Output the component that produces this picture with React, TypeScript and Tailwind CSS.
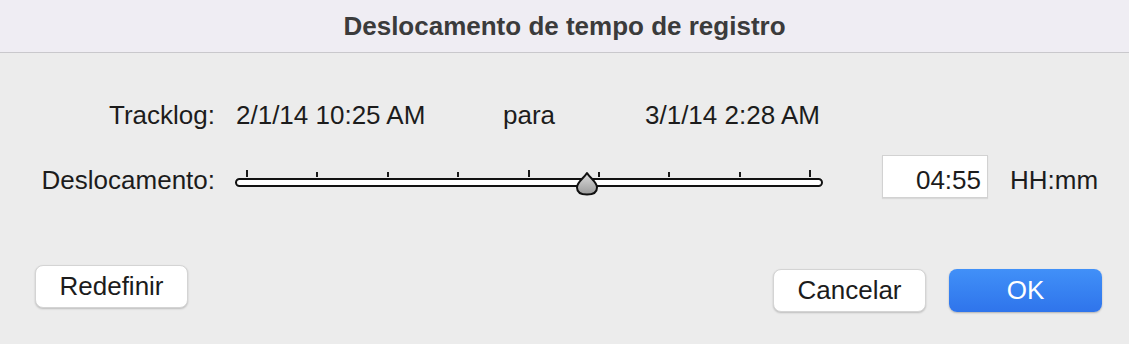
import React from "react";

const font = { fontFamily: '"Liberation Sans", Arial, sans-serif' };

const TICKS = [0, 1, 2, 3, 4, 5, 6, 7, 8];
const MAJOR = [0, 4, 8];

function Slider({ value }: { value: number }) {
  return (
    <div className="relative h-[43px] w-[588px]">
      <div className="flex flex-col pt-[15px]">
        <div className="flex h-[7px] items-end justify-between pl-[11px] pr-[12px]">
          {TICKS.map((t) => (
            <div
              key={t}
              className={
                MAJOR.includes(t)
                  ? "h-[7px] w-[2px] bg-[#1a1a1a]"
                  : "h-[5px] w-[2px] bg-[#1a1a1a]"
              }
            />
          ))}
        </div>
        <div className="mt-[1px] h-[9px] rounded-full border-2 border-[#111] bg-white" />
      </div>
      <svg
        className="absolute top-[16px]"
        style={{ left: `calc(12px + ${value} * (100% - 25px) - 11px)` }}
        width="24"
        height="25"
        viewBox="0 0 24 25"
      >
        <defs>
          <linearGradient id="thumb" x1="0" y1="0" x2="0" y2="1">
            <stop offset="0" stopColor="#dcdcdc" />
            <stop offset="1" stopColor="#9a9a9a" />
          </linearGradient>
        </defs>
        <path
          d="M12 2 C15 7 22 11 22 16.5 C22 21 18 23.5 12 23.5 C6 23.5 2 21 2 16.5 C2 11 9 7 12 2 Z"
          fill="url(#thumb)"
          stroke="#111"
          strokeWidth="2"
          strokeLinejoin="round"
        />
      </svg>
    </div>
  );
}

export default function App() {
  return (
    <div
      className="flex h-[344px] w-[1129px] flex-col bg-[#ececec] text-[26px] text-[#1c1c1c]"
      style={font}
    >
      <div className="flex h-[53px] shrink-0 items-center justify-center border-b border-[#c9c8cc] bg-[#efedf3]">
        <h1 className="text-[26px] font-bold text-[#3b3b3b]">
          Deslocamento de tempo de registro
        </h1>
      </div>

      <div className="flex flex-col pt-[47px]">
        <div className="flex h-[30px] items-center leading-[30px]">
          <div className="w-[215px] text-right">Tracklog:</div>
          <div className="ml-[21px] flex w-[586px]">
            <span className="w-[267px]">2/1/14 10:25 AM</span>
            <span className="w-[142px]">para</span>
            <span>3/1/14 2:28 AM</span>
          </div>
        </div>

        <div className="mt-[25px] flex h-[43px] items-stretch leading-[30px]">
          <div className="w-[215px] pt-[10px] text-right">Deslocamento:</div>
          <div className="ml-[20px]">
            <Slider value={0.603} />
          </div>
          <div className="ml-[59px] h-[43px] w-[106px] border border-[#d2d2d2] bg-white pr-[6px] pt-[9px] text-right shadow-[0_1px_1px_rgba(0,0,0,0.08)]">
            04:55
          </div>
          <div className="ml-[22px] pt-[10px]">HH:mm</div>
        </div>
      </div>

      <div className="mt-[67px] flex items-start justify-between pl-[35px] pr-[27px]">
        <button className="h-[43px] w-[153px] rounded-[8px] border border-[#d4d4d4] bg-white text-[26px] leading-[41px] text-[#1c1c1c] shadow-[0_1px_2px_rgba(0,0,0,0.2)]">
          Redefinir
        </button>
        <div className="mt-[4px] flex gap-[23px]">
          <button className="h-[43px] w-[153px] rounded-[8px] border border-[#d4d4d4] bg-white text-[26px] leading-[41px] text-[#1c1c1c] shadow-[0_1px_2px_rgba(0,0,0,0.2)]">
            Cancelar
          </button>
          <button className="h-[43px] w-[153px] rounded-[8px] bg-gradient-to-b from-[#4190f8] to-[#2f74eb] text-[26px] leading-[43px] text-white shadow-[0_1px_2px_rgba(0,0,0,0.25)]">
            OK
          </button>
        </div>
      </div>
    </div>
  );
}
